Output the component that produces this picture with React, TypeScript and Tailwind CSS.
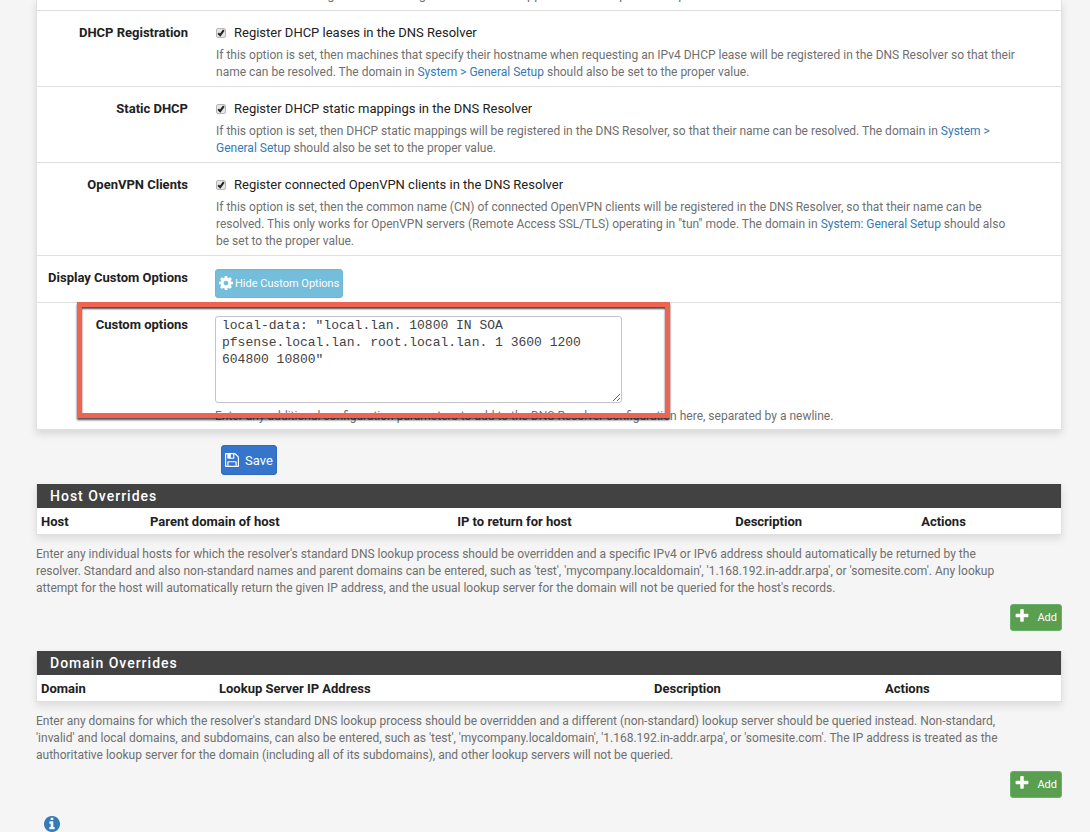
import type { ReactNode } from "react";

const ICONS = {
  cog: "M1152 896q0-106-75-181t-181-75-181 75-75 181 75 181 181 75 181-75 75-181zm512-109v222q0 12-8 23t-20 13l-185 28q-19 54-39 91 35 50 107 138 10 12 10 25t-9 23q-27 37-99 108t-94 71q-12 0-26-9l-138-108q-44 23-91 38-16 136-29 186-7 28-36 28h-222q-14 0-24.5-8.5t-11.5-21.5l-28-184q-49-16-90-37l-141 107q-10 9-25 9-14 0-25-11-126-114-165-168-7-10-7-23 0-12 8-23 15-21 51-66.5t54-70.5q-27-50-41-99l-183-27q-13-2-21-12.5t-8-23.5v-222q0-12 8-23t19-13l186-28q14-46 39-92-40-57-107-138-10-12-10-24 0-10 9-23 26-36 98.5-107.5t94.5-71.5q13 0 26 10l138 107q44-23 91-38 16-136 29-186 7-28 36-28h222q14 0 24.5 8.5t11.5 21.5l28 184q49 16 90 37l142-107q9-9 24-9 13 0 25 10 129 119 165 170 7 8 7 22 0 12-8 23-15 21-51 66.5t-54 70.5q26 50 41 98l183 28q13 2 21 12.5t8 23.5z",
  save: "M512 1536h768v-384h-768v384zm896 0h128v-896q0-14-10-38.5t-20-34.5l-281-281q-10-10-34-20t-39-10v416q0 40-28 68t-68 28h-576q-40 0-68-28t-28-68v-416h-128v1280h128v-416q0-40 28-68t68-28h832q40 0 68 28t28 68v416zm-384-928v-320q0-13-9.5-22.5t-22.5-9.5h-192q-13 0-22.5 9.5t-9.5 22.5v320q0 13 9.5 22.5t22.5 9.5h192q13 0 22.5-9.5t9.5-22.5zm640 32v928q0 40-28 68t-68 28h-1344q-40 0-68-28t-28-68v-1344q0-40 28-68t68-28h928q40 0 88 20t76 48l280 280q28 28 48 76t20 88z",
  plus: "M1600 736v192q0 40-28 68t-68 28h-416v416q0 40-28 68t-68 28h-192q-40 0-68-28t-28-68v-416h-416q-40 0-68-28t-28-68v-192q0-40 28-68t68-28h416v-416q0-40 28-68t68-28h192q40 0 68 28t28 68v416h416q40 0 68 28t28 68z",
  info: "M1152 1376v-160q0-14-9-23t-23-9h-96v-512q0-14-9-23t-23-9h-320q-14 0-23 9t-9 23v160q0 14 9 23t23 9h96v320h-96q-14 0-23 9t-9 23v160q0 14 9 23t23 9h448q14 0 23-9t9-23zm-128-896v-160q0-14-9-23t-23-9h-192q-14 0-23 9t-9 23v160q0 14 9 23t23 9h192q14 0 23-9t9-23zm640 416q0 209-103 385.5t-279.5 279.5-385.5 103-385.5-103-279.5-279.5-103-385.5 103-385.5 279.5-279.5 385.5-103 385.5 103 279.5 279.5 103 385.5z",
};

function Icon({ name, className }: { name: keyof typeof ICONS; className: string }) {
  return (
    <svg viewBox="128 128 1536 1536" fill="currentColor" aria-hidden="true" className={className}>
      <path d={ICONS[name]} />
    </svg>
  );
}

function SetupLink({ children }: { children: ReactNode }) {
  return (
    <a href="#general-setup" className="text-[#337ab7] hover:underline">
      {children}
    </a>
  );
}

function CheckRow({ id, title, label, children }: { id: string; title: string; label: string; children: ReactNode }) {
  return (
    <div className="flex gap-7 border-b border-[#e0e0e0] pt-[13px] pb-[5px]">
      <div className="w-[151px] shrink-0 text-right font-bold text-[#212121]">{title}</div>
      <div className="min-w-0 flex-1">
        <label htmlFor={id} className="flex items-center gap-2 text-[#212121]">
          <span className="grid size-[10px] shrink-0 place-items-center">
            <input
              id={id}
              type="checkbox"
              defaultChecked
              className="peer col-start-1 row-start-1 size-[10px] appearance-none rounded-xs border border-[#b5b5b5] bg-[#e6e6e6]"
            />
            <svg
              viewBox="0 0 10 10"
              fill="none"
              stroke="#222"
              strokeWidth="2"
              className="pointer-events-none invisible col-start-1 row-start-1 size-[10px] peer-checked:visible"
            >
              <path d="M2.2 5.2 4.2 7.2 7.8 2.2" />
            </svg>
          </span>
          {label}
        </label>
        <p className="mt-[6px] pr-11 text-xs leading-[17px]">{children}</p>
      </div>
    </div>
  );
}

type Column = { label: string; width: string };

const HOST_COLUMNS: Column[] = [
  { label: "Host", width: "w-[109px]" },
  { label: "Parent domain of host", width: "w-[30%]" },
  { label: "IP to return for host", width: "w-[278px]" },
  { label: "Description", width: "w-[186px]" },
  { label: "Actions", width: "" },
];

const DOMAIN_COLUMNS: Column[] = [
  { label: "Domain", width: "w-[178px]" },
  { label: "Lookup Server IP Address", width: "w-[435px]" },
  { label: "Description", width: "w-[231px]" },
  { label: "Actions", width: "" },
];

function Overrides({ title, columns, children }: { title: string; columns: Column[]; children: ReactNode }) {
  return (
    <section>
      <div className="border border-t-0 border-[#e0e0e0] bg-white shadow-[0_4px_8px_rgba(0,0,0,0.1)]">
        <h2 className="h-6 bg-[#424242] pl-[13px] text-sm leading-6 font-medium tracking-[1px] text-white">{title}</h2>
        <table className="w-full table-fixed">
          <thead>
            <tr>
              {columns.map((col) => (
                <th key={col.label} scope="col" className={`h-[26px] pl-1 text-left font-bold text-[#212121] ${col.width}`}>
                  {col.label}
                </th>
              ))}
            </tr>
          </thead>
        </table>
      </div>
      <p className="mt-[11px] pr-11 text-xs leading-[17px]">{children}</p>
      <div className="mt-[7px] flex justify-end">
        <button
          type="button"
          className="flex h-[27px] items-center gap-2 rounded-[3px] border border-[#67b168] bg-[#5a9e4f] px-1 text-[11px] text-white"
        >
          <Icon name="plus" className="mb-1 size-[14px]" />
          Add
        </button>
      </div>
    </section>
  );
}

export default function App() {
  return (
    <main className="min-h-screen bg-[#f5f5f5] pr-7 pl-9 font-[Roboto,sans-serif] text-[13px] leading-[17px] text-[#6f6f6f]">
      <form onSubmit={(e) => e.preventDefault()}>
        <div className="border-x border-b border-[#e0e0e0] bg-white shadow-[0_4px_8px_rgba(0,0,0,0.12)]">
          {/* tail of the forwarding row, scrolled almost out of view */}
          <div className="flex h-[11px] items-end overflow-hidden border-b border-[#e0e0e0] pb-[7px] pl-[179px]">
            <p>Note that ALL configured forwarding servers MUST support SSL/TLS queries on port 853.</p>
          </div>

          <CheckRow id="regdhcp" title="DHCP Registration" label="Register DHCP leases in the DNS Resolver">
            If this option is set, then machines that specify their hostname when requesting an IPv4 DHCP lease will be
            registered in the DNS Resolver so that their name can be resolved. The domain in{" "}
            <SetupLink>System &gt; General Setup</SetupLink> should also be set to the proper value.
          </CheckRow>
          <CheckRow id="regdhcpstatic" title="Static DHCP" label="Register DHCP static mappings in the DNS Resolver">
            If this option is set, then DHCP static mappings will be registered in the DNS Resolver, so that their name
            can be resolved. The domain in <SetupLink>System &gt; General Setup</SetupLink> should also be set to the
            proper value.
          </CheckRow>
          <CheckRow id="regovpn" title="OpenVPN Clients" label="Register connected OpenVPN clients in the DNS Resolver">
            If this option is set, then the common name (CN) of connected OpenVPN clients will be registered in the DNS
            Resolver, so that their name can be resolved. This only works for OpenVPN servers (Remote Access SSL/TLS)
            operating in "tun" mode. The domain in <SetupLink>System: General Setup</SetupLink> should also be set to
            the proper value.
          </CheckRow>

          <div className="flex gap-[27px] border-b border-[#e0e0e0] pt-[13px] pb-1">
            <div className="w-[151px] shrink-0 text-right font-bold text-[#212121]">Display Custom Options</div>
            <button
              type="button"
              className="flex h-[29px] items-center gap-[2px] rounded-[3px] border border-[#6bb8d6] bg-[#74bddb] px-[3px] text-[11px] text-white"
            >
              <Icon name="cog" className="mb-[2px] size-[14px]" />
              Hide Custom Options
            </button>
          </div>

          <div className="relative flex gap-[27px] pt-[13px] pb-1">
            <label htmlFor="custom_options" className="w-[151px] shrink-0 text-right font-bold text-[#212121]">
              Custom options
            </label>
            <div className="min-w-0 flex-1">
              <textarea
                id="custom_options"
                spellCheck={false}
                defaultValue={'local-data: "local.lan. 10800 IN SOA\npfsense.local.lan. root.local.lan. 1 3600 1200\n604800 10800"'}
                className="block h-[87px] w-[407px] resize rounded-[3px] border border-[#c4c4c4] bg-white px-[6px] font-['Liberation_Mono',monospace] text-[13px] leading-[17px] text-[#424242]"
              />
              <p className="mt-[5px] text-xs leading-[17px]">
                Enter any additional configuration parameters to add to the DNS Resolver configuration here, separated
                by a newline.
              </p>
            </div>
            {/* callout frame */}
            <div className="pointer-events-none absolute -top-px left-10 h-[116px] w-[593px] border-5 border-[#ee6352] shadow-[0_2px_2px_rgba(0,0,0,0.7),inset_0_2px_2px_rgba(0,0,0,0.7)]" />
          </div>
        </div>

        <button
          type="submit"
          className="mt-[15px] ml-[185px] flex h-[30px] items-center gap-[6px] rounded-[3px] border border-[#2f6bbd] bg-[#3575cc] px-[3px] text-white"
        >
          <Icon name="save" className="size-[14px]" />
          Save
        </button>
      </form>

      <div className="mt-[9px] flex flex-col gap-5">
        <Overrides title="Host Overrides" columns={HOST_COLUMNS}>
          Enter any individual hosts for which the resolver's standard DNS lookup process should be overridden and a
          specific IPv4 or IPv6 address should automatically be returned by the resolver. Standard and also non-standard
          names and parent domains can be entered, such as 'test', 'mycompany.localdomain', '1.168.192.in-addr.arpa', or
          'somesite.com'. Any lookup attempt for the host will automatically return the given IP address, and the usual
          lookup server for the domain will not be queried for the host's records.
        </Overrides>
        <Overrides title="Domain Overrides" columns={DOMAIN_COLUMNS}>
          Enter any domains for which the resolver's standard DNS lookup process should be overridden and a different
          (non-standard) lookup server should be queried instead. Non-standard, 'invalid' and local domains, and
          subdomains, can also be entered, such as 'test', 'mycompany.localdomain', '1.168.192.in-addr.arpa', or
          'somesite.com'. The IP address is treated as the authoritative lookup server for the domain (including all of
          its subdomains), and other lookup servers will not be queried.
        </Overrides>
      </div>

      <button type="button" aria-label="Show information" className="mt-[18px] ml-2 block text-[#337ab7]">
        <Icon name="info" className="size-4" />
      </button>
    </main>
  );
}
